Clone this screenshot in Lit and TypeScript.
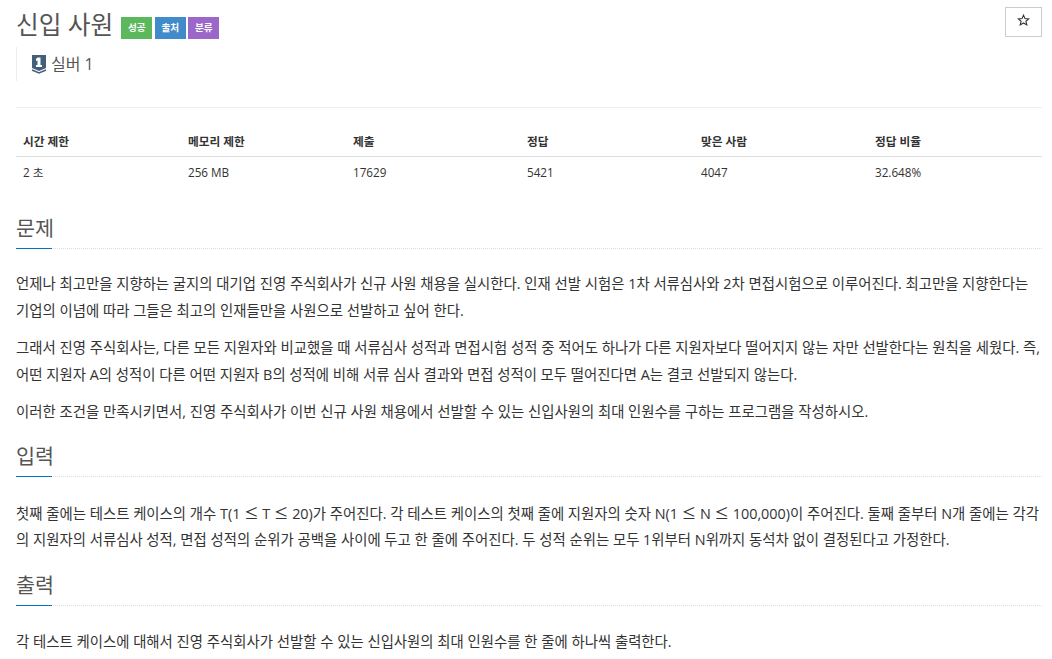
import { LitElement, html, css } from "lit";
import { customElement } from "lit/decorators.js";

const stats = [
  ["시간 제한", "2 초", 165],
  ["메모리 제한", "256 MB", 165],
  ["제출", "17629", 174],
  ["정답", "5421", 174],
  ["맞은 사람", "4047", 174],
  ["정답 비율", "32.648%", 174],
];

@customElement("app-root")
export class AppRoot extends LitElement {
  static styles = css`
    :host {
      display: block;
      height: 659px;
      overflow: hidden;
      background: #fff;
      font-family: "Open Sans", "Noto Sans CJK KR", sans-serif;
      font-size: 14.4px;
      line-height: 20px;
      color: #333;
      box-sizing: border-box;
      padding: 0 10px 0 16px;
    }
    * { box-sizing: border-box; }
    .top { display: flex; justify-content: space-between; align-items: flex-start; padding-top: 7px; height: 40px; }
    .title { display: flex; align-items: flex-start; }
    h1 { margin: 0; font-size: 24.7px; line-height: 36px; font-weight: 400; color: #555; }
    .labels { display: flex; gap: 2.5px; margin: 10px 0 0 8px; }
    .label { width: 31px; height: 22px; font-size: 9.6px; line-height: 22px; font-weight: 700; text-align: center; color: #fff; }
    .green { background: #5cb85c; }
    .blue { background: #428bca; }
    .purple { background: #9b68c9; }
    .star { width: 37px; height: 30px; border: 1px solid #ccc; display: flex; justify-content: center; padding-top: 6px; }
    .tier { margin-top: 7px; height: 34px; border-left: 1px solid #eee; padding-left: 14px; display: flex; align-items: center; gap: 4px; font-size: 16px; color: #555; }
    .rule { margin-top: 26px; border-top: 1px solid #eee; }
    .stats { margin-top: 18px; display: flex; }
    .col { flex: none; }
    .th { height: 31px; padding: 5px 7px 0; font-size: 11.7px; font-weight: 700; border-bottom: 1px solid #ddd; color: #333; }
    .td { height: 32px; padding: 5px 7px 7px; font-size: 11.7px; line-height: 20px; }
    .head { height: 36px; border-bottom: 1px dotted #ddd; position: relative; padding-top: 2px; }
    .head h2 { margin: 0; font-size: 20.7px; line-height: 26px; font-weight: 400; color: #555; }
    .head::after { content: ""; position: absolute; left: 0; bottom: -1px; width: 36px; height: 1px; background: #0076c0; }
    .s1 { margin-top: 24px; }
    p { margin: 0; font-size: 14.4px; line-height: 26.5px; color: #333; white-space: nowrap; overflow: hidden; }
    .body { margin-top: 22px; }
    .body.low { margin-top: 23px; }
    .gap { margin-top: 11px; }
    .s2 { margin-top: 15px; }
    .s3 { margin-top: 16px; }
    .le { font-family: "Noto Sans CJK KR", sans-serif; }
  `;

  render() {
    const le = html`<span class="le">≤</span>`;
    return html`
      <div class="top">
        <div class="title">
          <h1>신입 사원</h1>
          <div class="labels">
            <span class="label green">성공</span>
            <span class="label blue">출처</span>
            <span class="label purple">분류</span>
          </div>
        </div>
        <div class="star">
          <svg width="13" height="13" viewBox="0 0 13 13"><path d="M6.5 1.2l1.500 3.400 3.700.3-2.800 2.400.9 3.600-3.300-1.900-3.300 1.900.9-3.600L1.300 4.900l3.700-.3z" fill="none" stroke="#333" stroke-width="1.100"/></svg>
        </div>
      </div>
      <div class="tier">
        <svg width="16" height="20" viewBox="0 0 16 20">
          <path d="M1 1h14v13l-7 3-7-3z" fill="#435f7a"/>
          <path d="M1 16l7 3 7-3" fill="none" stroke="#435f7a" stroke-width="1.500"/>
          <path d="M6.500 3.500h3v7.500h1.500v2H5v-2h1.500V6.500L5 7V5z" fill="#fff"/>
        </svg>
        <span>실버 1</span>
      </div>
      <div class="rule"></div>
      <div class="stats">
        ${stats.map(
          ([h, v, w]) => html`<div class="col" style="width:${w}px">
            <div class="th">${h}</div>
            <div class="td">${v}</div>
          </div>`
        )}
      </div>
      <div class="head s1"><h2>문제</h2></div>
      <div class="body">
        <p>언제나 최고만을 지향하는 굴지의 대기업 진영 주식회사가 신규 사원 채용을 실시한다. 인재 선발 시험은 1차 서류심사와 2차 면접시험으로 이루어진다. 최고만을 지향한다는</p>
        <p>기업의 이념에 따라 그들은 최고의 인재들만을 사원으로 선발하고 싶어 한다.</p>
        <p class="gap">그래서 진영 주식회사는, 다른 모든 지원자와 비교했을 때 서류심사 성적과 면접시험 성적 중 적어도 하나가 다른 지원자보다 떨어지지 않는 자만 선발한다는 원칙을 세웠다. 즉,</p>
        <p>어떤 지원자 A의 성적이 다른 어떤 지원자 B의 성적에 비해 서류 심사 결과와 면접 성적이 모두 떨어진다면 A는 결코 선발되지 않는다.</p>
        <p class="gap">이러한 조건을 만족시키면서, 진영 주식회사가 이번 신규 사원 채용에서 선발할 수 있는 신입사원의 최대 인원수를 구하는 프로그램을 작성하시오.</p>
      </div>
      <div class="head s2"><h2>입력</h2></div>
      <div class="body low">
        <p>첫째 줄에는 테스트 케이스의 개수 T(1 ${le} T ${le} 20)가 주어진다. 각 테스트 케이스의 첫째 줄에 지원자의 숫자 N(1 ${le} N ${le} 100,000)이 주어진다. 둘째 줄부터 N개 줄에는 각각</p>
        <p>의 지원자의 서류심사 성적, 면접 성적의 순위가 공백을 사이에 두고 한 줄에 주어진다. 두 성적 순위는 모두 1위부터 N위까지 동석차 없이 결정된다고 가정한다.</p>
      </div>
      <div class="head s3"><h2>출력</h2></div>
      <div class="body low">
        <p>각 테스트 케이스에 대해서 진영 주식회사가 선발할 수 있는 신입사원의 최대 인원수를 한 줄에 하나씩 출력한다.</p>
      </div>
    `;
  }
}
